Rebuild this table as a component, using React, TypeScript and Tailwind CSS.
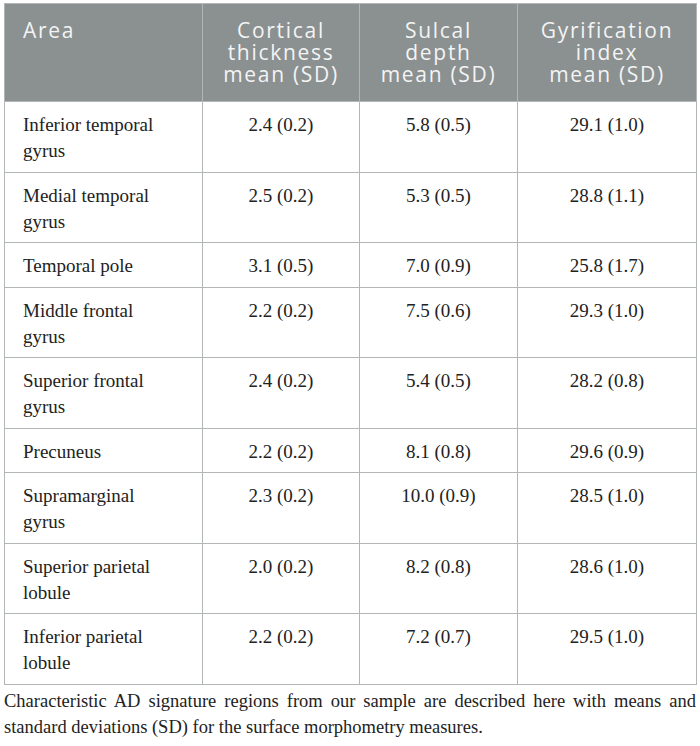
const rows: [string, string, string, string][] = [
  ["Inferior temporal gyrus", "2.4 (0.2)", "5.8 (0.5)", "29.1 (1.0)"],
  ["Medial temporal gyrus", "2.5 (0.2)", "5.3 (0.5)", "28.8 (1.1)"],
  ["Temporal pole", "3.1 (0.5)", "7.0 (0.9)", "25.8 (1.7)"],
  ["Middle frontal gyrus", "2.2 (0.2)", "7.5 (0.6)", "29.3 (1.0)"],
  ["Superior frontal gyrus", "2.4 (0.2)", "5.4 (0.5)", "28.2 (0.8)"],
  ["Precuneus", "2.2 (0.2)", "8.1 (0.8)", "29.6 (0.9)"],
  ["Supramarginal gyrus", "2.3 (0.2)", "10.0 (0.9)", "28.5 (1.0)"],
  ["Superior parietal lobule", "2.0 (0.2)", "8.2 (0.8)", "28.6 (1.0)"],
  ["Inferior parietal lobule", "2.2 (0.2)", "7.2 (0.7)", "29.5 (1.0)"],
];

const headers = [
  ["Cortical", "thickness", "mean (SD)"],
  ["Sulcal", "depth", "mean (SD)"],
  ["Gyrification", "index", "mean (SD)"],
];

export default function App() {
  return (
    <div className="w-[700px] bg-white pt-[3px] px-[4px]">
      <table className="w-[692px] table-fixed border-collapse border border-[#b3b6b6]">
        <colgroup>
          <col className="w-[198px]" />
          <col className="w-[157px]" />
          <col className="w-[158px]" />
          <col className="w-[179px]" />
        </colgroup>
        <thead>
          <tr className="bg-[#8b9091] text-[#f3f4f4] font-['Open_Sans',sans-serif] text-[21px] leading-[22px] tracking-[1.7px]">
            <th className="border-r border-[#b3b6b6] pl-[18px] pt-[15px] pb-[16px] text-left align-top font-normal">
              Area
            </th>
            {headers.map((h) => (
              <th
                key={h[0]}
                className="border-r border-[#b3b6b6] pt-[15px] pb-[16px] text-center align-top font-normal"
              >
                {h.map((l) => (
                  <div key={l}>{l}</div>
                ))}
              </th>
            ))}
          </tr>
        </thead>
        <tbody className="font-['Liberation_Serif',serif] text-[19px] leading-[26px] text-[#222]">
          {rows.map((r) => (
            <tr key={r[0]} className="border-t border-[#b3b6b6]">
              <td className="border-r border-[#b3b6b6] pl-[18px] pr-[40px] pt-[10px] pb-[7.5px] align-top">
                {r[0]}
              </td>
              {r.slice(1).map((v, i) => (
                <td
                  key={i}
                  className="border-r border-[#b3b6b6] pt-[10px] pb-[7.5px] text-center align-top"
                >
                  {v}
                </td>
              ))}
            </tr>
          ))}
        </tbody>
      </table>
      <p className="mt-[3px] w-[692px] text-justify font-['Liberation_Serif',serif] text-[18.5px] leading-[26px] text-[#222]">
        Characteristic AD signature regions from our sample are described here with means and
        standard deviations (SD) for the surface morphometry measures.
      </p>
    </div>
  );
}
